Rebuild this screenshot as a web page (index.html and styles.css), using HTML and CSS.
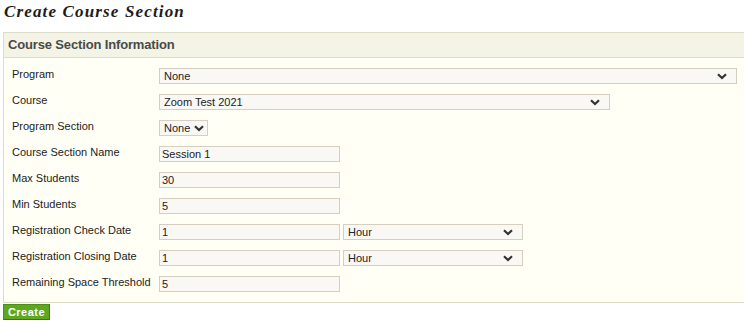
FILE: index.html
```html
<!DOCTYPE html>
<html>
<head>
<meta charset="utf-8">
<link rel="stylesheet" href="styles.css">
</head>
<body>
<h1 class="title">Create Course Section</h1>
<div class="box">
  <div class="box-head">Course Section Information</div>
  <div class="form">
    <div class="label">Program</div>
    <div class="field"><div class="sel w-program"><span>None</span><svg class="chev" viewBox="0 0 10 7"><path d="M1 1.2 L5 5 L9 1.2" fill="none" stroke="#333" stroke-width="2.2"/></svg></div></div>

    <div class="label">Course</div>
    <div class="field"><div class="sel w-course"><span>Zoom Test 2021</span><svg class="chev" viewBox="0 0 10 7"><path d="M1 1.2 L5 5 L9 1.2" fill="none" stroke="#333" stroke-width="2.2"/></svg></div></div>

    <div class="label">Program Section</div>
    <div class="field"><div class="sel w-small"><span>None</span><svg class="chev" viewBox="0 0 10 7"><path d="M1 1.2 L5 5 L9 1.2" fill="none" stroke="#333" stroke-width="2.2"/></svg></div></div>

    <div class="label">Course Section Name</div>
    <div class="field"><div class="inp">Session 1</div></div>

    <div class="label">Max Students</div>
    <div class="field"><div class="inp">30</div></div>

    <div class="label">Min Students</div>
    <div class="field"><div class="inp">5</div></div>

    <div class="label">Registration Check Date</div>
    <div class="field"><div class="inp">1</div><div class="sel w-hour"><span>Hour</span><svg class="chev" viewBox="0 0 10 7"><path d="M1 1.2 L5 5 L9 1.2" fill="none" stroke="#333" stroke-width="2.2"/></svg></div></div>

    <div class="label">Registration Closing Date</div>
    <div class="field"><div class="inp">1</div><div class="sel w-hour"><span>Hour</span><svg class="chev" viewBox="0 0 10 7"><path d="M1 1.2 L5 5 L9 1.2" fill="none" stroke="#333" stroke-width="2.2"/></svg></div></div>

    <div class="label">Remaining Space Threshold</div>
    <div class="field"><div class="inp">5</div></div>
  </div>
</div>
<button class="btn">Create</button>
</body>
</html>
```
FILE: styles.css
```css
html, body {
  margin: 0;
  padding: 0;
  background: #ffffff;
  overflow: hidden;
}
body {
  font-family: "Liberation Sans", Arial, sans-serif;
  font-size: 11px;
  color: #222;
}
.title {
  margin: 0;
  padding: 1px 0 0 4px;
  height: 32px;
  box-sizing: border-box;
  font-family: "Liberation Serif", "Times New Roman", serif;
  font-style: italic;
  font-weight: bold;
  font-size: 17px;
  letter-spacing: 1.15px;
  color: #1c1c1c;
  line-height: 22px;
}
.box {
  margin-left: 3px;
  width: 760px;
  border: 1px solid #dcdcc8;
  border-right: none;
  background: #fffff6;
}
.box-head {
  height: 24px;
  background: #f3f3e6;
  border-bottom: 1px solid #dcdcc8;
  padding-left: 4px;
  font-size: 13px;
  font-weight: bold;
  letter-spacing: -0.15px;
  color: #4a4a4a;
  line-height: 24px;
}
.form {
  display: grid;
  grid-template-columns: 147px 1fr;
  grid-auto-rows: 26px;
  padding: 10px 0 0 8px;
}
.label {
  line-height: 12px;
  font-size: 11px;
  color: #222;
  white-space: nowrap;
}
.field {
  display: flex;
  gap: 3px;
}
.inp, .sel {
  box-sizing: border-box;
  height: 16px;
  border: 1px solid #d6cfbf;
  background: #f9f8f4;
  font-size: 11px;
  line-height: 15px;
  color: #222;
  padding-left: 2px;
}
.inp {
  width: 181px;
}
.sel {
  display: flex;
  align-items: center;
  justify-content: space-between;
  padding: 0 9px 0 4px;
}
.sel span {
  line-height: 14px;
}
.chev {
  width: 10px;
  height: 7px;
}
.w-program { width: 578px; }
.w-course { width: 451px; }
.w-small { width: 49px; justify-content: flex-start; gap: 4px; padding-right: 2px; }
.w-hour { width: 180px; }
.btn {
  display: block;
  margin: 1px 0 0 3px;
  width: 47px;
  height: 16px;
  padding: 0;
  border: 1px solid #4e8f1a;
  border-right-color: #3d7510;
  border-bottom-color: #3d7510;
  background: #5ea820;
  color: #ffffff;
  font-family: "Liberation Sans", Arial, sans-serif;
  font-weight: bold;
  font-size: 11px;
  letter-spacing: 0.5px;
  line-height: 14px;
}
```
